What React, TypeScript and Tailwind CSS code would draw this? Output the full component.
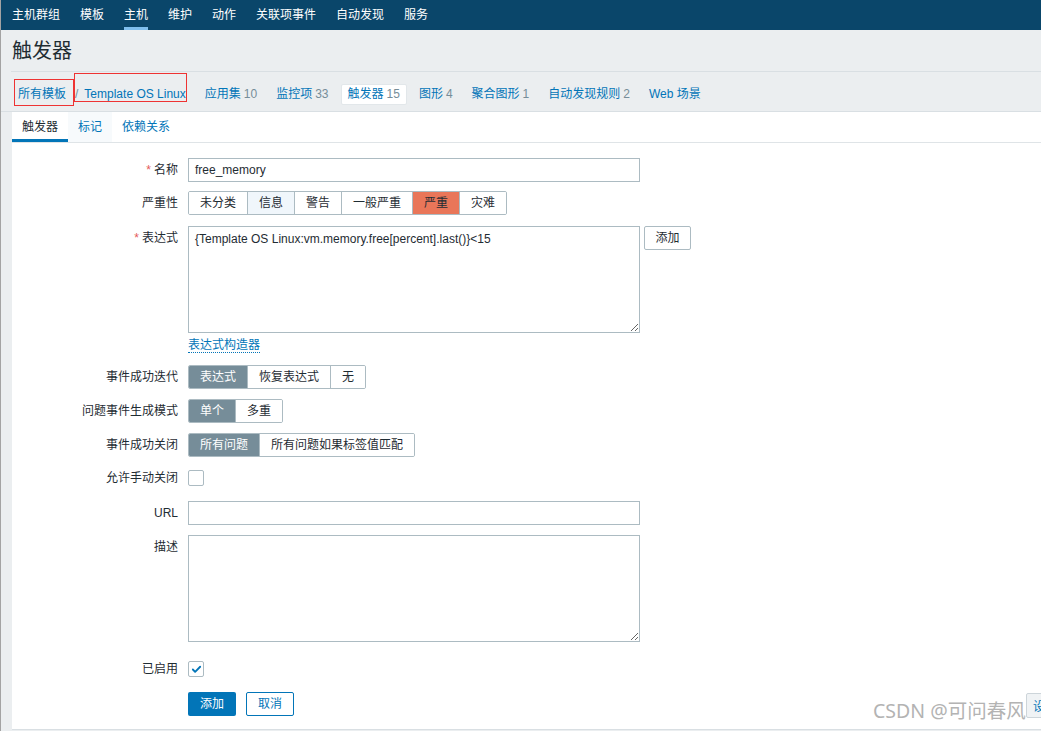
import { Check } from 'lucide-react';

const font = { fontFamily: '"Liberation Sans", "Noto Sans CJK SC", sans-serif' };

const topNav = ['主机群组', '模板', '主机', '维护', '动作', '关联项事件', '自动发现', '服务'];

const subTabs: Array<{ label: string; count?: string; active?: boolean }> = [
  { label: '应用集', count: '10' },
  { label: '监控项', count: '33' },
  { label: '触发器', count: '15', active: true },
  { label: '图形', count: '4' },
  { label: '聚合图形', count: '1' },
  { label: '自动发现规则', count: '2' },
  { label: 'Web 场景' },
];

function Segmented({ items, selected, selectedClass }: { items: string[]; selected: number; selectedClass: string }) {
  return (
    <div className="flex h-[24px] border border-[#acbbc2] rounded-[2px] overflow-hidden">
      {items.map((it, i) => (
        <div
          key={it}
          className={`px-[11px] flex items-center text-[12px] ${i > 0 ? 'border-l border-[#acbbc2]' : ''} ${
            i === selected ? selectedClass : it === '信息' ? 'bg-[#f0f6fb] text-[#1f2c33]' : 'bg-white text-[#1f2c33]'
          }`}
        >
          {it}
        </div>
      ))}
    </div>
  );
}

function Row({ label, required, top, children, className = '' }: { label: string; required?: boolean; top?: boolean; children: React.ReactNode; className?: string }) {
  return (
    <div className={`flex ${top ? 'items-start' : 'items-center'} ${className}`}>
      <div className="w-[176px] pr-[10px] text-right text-[12px] leading-[24px] text-[#1f2c33] shrink-0">
        {required && <span className="text-[#e45959] mr-[3px]">*</span>}
        {label}
      </div>
      {children}
    </div>
  );
}

export default function App() {
  return (
    <div style={font} className="relative w-[1041px] h-[731px] overflow-hidden bg-[#ebeef0] border-l border-[#a3a3a3]">
      {/* Top navigation */}
      <nav className="h-[30px] bg-[#0a466a] flex items-stretch pl-[1px]">
        {topNav.map((item) => (
          <div key={item} className="relative px-[10px] flex items-center text-[12px] text-white">
            {item}
            {item === '主机' && <span className="absolute left-[10px] right-[10px] bottom-0 h-[3px] bg-[#7fbfee]" />}
          </div>
        ))}
      </nav>

      {/* Header */}
      <div className="h-[42px] ml-[10px] border-b border-[#d9dfe3] flex items-center">
        <h1 className="pl-[1px] text-[20px] text-[#1f2c33] font-normal">触发器</h1>
      </div>

      {/* Host navigation */}
      <div className="relative h-[40px] border-b border-[#d9dfe3] flex items-center pt-[5px] text-[12px] pl-[10px]">
        <div className="px-[7px] text-[#0275b8]">所有模板</div>
        <span className="text-[#768d99] ml-[2px] mr-[6px]">/</span>
        <div className="text-[#0275b8]">Template OS Linux</div>
        <div className="flex items-center gap-[5px] ml-[12px]">
          {subTabs.map((t) => (
            <div
              key={t.label}
              className={`h-[21px] flex items-center ${t.active ? 'bg-white border border-[#e2e7ea] rounded-[2px] px-[6px]' : 'px-[7px]'}`}
            >
              <span className="text-[#0275b8]">{t.label}</span>
              {t.count && <span className="text-[#768d99] ml-[3px]">{t.count}</span>}
            </div>
          ))}
        </div>
        {/* annotation boxes */}
        <span className="absolute left-[13px] top-[7px] w-[60px] h-[27px] border border-[#ee3333]" />
        <span className="absolute left-[73px] top-[1px] w-[113px] h-[29px] border border-[#ee3333]" />
      </div>

      {/* Form panel */}
      <div className="ml-[11px] h-[618px] bg-white border-b border-[#d9dfe3]">
        <div className="h-[31px] flex border-b border-[#dfe4e7] text-[12px]">
          <div className="relative px-[10px] flex items-center text-[#1f2c33]">
            触发器
            <span className="absolute left-0 right-0 bottom-0 h-[3px] bg-[#0275b8]" />
          </div>
          <div className="px-[10px] flex items-center text-[#0275b8] bg-[#f7fafc]">标记</div>
          <div className="px-[10px] flex items-center text-[#0275b8]">依赖关系</div>
        </div>

        <div className="pt-[15px]">
          <Row label="名称" required>
            <div className="w-[452px] h-[24px] border border-[#acbbc2] px-[6px] flex items-center text-[12px] text-[#1f2c33]">
              free_memory
            </div>
          </Row>

          <Row label="严重性" className="mt-[9px]">
            <Segmented items={['未分类', '信息', '警告', '一般严重', '严重', '灾难']} selected={4} selectedClass="bg-[#e97659] text-[#1f2c33]" />
          </Row>

          <Row label="表达式" required top className="mt-[11px]">
            <textarea
              readOnly
              value="{Template OS Linux:vm.memory.free[percent].last()}<15"
              className="w-[452px] h-[107px] border border-[#acbbc2] px-[6px] py-[4px] text-[12px] leading-[16px] text-[#1f2c33] outline-none resize"
              style={font}
            />
            <button className="ml-[4px] w-[47px] h-[24px] border border-[#acbbc2] rounded-[2px] bg-white text-[12px] text-[#1f2c33]">
              添加
            </button>
          </Row>

          <div className="ml-[176px] mt-[4px] h-[15px] leading-[14px]">
            <span className="text-[12px] text-[#0275b8] border-b border-dotted border-[#0275b8]">表达式构造器</span>
          </div>

          <Row label="事件成功迭代" className="mt-[13px]">
            <Segmented items={['表达式', '恢复表达式', '无']} selected={0} selectedClass="bg-[#768d99] text-white" />
          </Row>

          <Row label="问题事件生成模式" className="mt-[10px]">
            <Segmented items={['单个', '多重']} selected={0} selectedClass="bg-[#768d99] text-white" />
          </Row>

          <Row label="事件成功关闭" className="mt-[10px]">
            <Segmented items={['所有问题', '所有问题如果标签值匹配']} selected={0} selectedClass="bg-[#768d99] text-white" />
          </Row>

          <Row label="允许手动关闭" className="mt-[9px]">
            <div className="w-[16px] h-[16px] border border-[#acbbc2] rounded-[2px] bg-white" />
          </Row>

          <Row label="URL" className="mt-[11px]">
            <div className="w-[452px] h-[24px] border border-[#acbbc2]" />
          </Row>

          <Row label="描述" top className="mt-[10px]">
            <textarea readOnly className="w-[452px] h-[107px] border border-[#acbbc2] outline-none resize" />
          </Row>

          <Row label="已启用" className="mt-[15px]">
            <div className="w-[16px] h-[16px] border border-[#acbbc2] rounded-[2px] bg-white flex items-center justify-center">
              <Check className="w-[11px] h-[11px] text-[#0275b8]" strokeWidth={4} />
            </div>
          </Row>

          <div className="ml-[176px] mt-[11px] flex gap-[10px]">
            <button className="w-[48px] h-[24px] rounded-[2px] bg-[#0275b8] text-white text-[12px]">添加</button>
            <button className="w-[48px] h-[24px] rounded-[2px] border border-[#0275b8] bg-white text-[#0275b8] text-[12px]">取消</button>
          </div>
        </div>
      </div>

      {/* Watermark & side button */}
      <div className="absolute left-[872px] top-[700px] text-[19.5px] leading-[22px] text-[#b3b3b3]" style={{ fontFamily: '"Noto Sans", "Noto Sans CJK SC", sans-serif' }}>
        CSDN @可问春风
      </div>
      <div className="absolute left-[1025px] top-[693px] w-[20px] h-[25px] bg-[#f0f3f5] border border-[#cdd5da] rounded-[2px] pl-[6px] pt-[4px] text-[12px] text-[#0275b8] overflow-hidden whitespace-nowrap">
        设置
      </div>
    </div>
  );
}
